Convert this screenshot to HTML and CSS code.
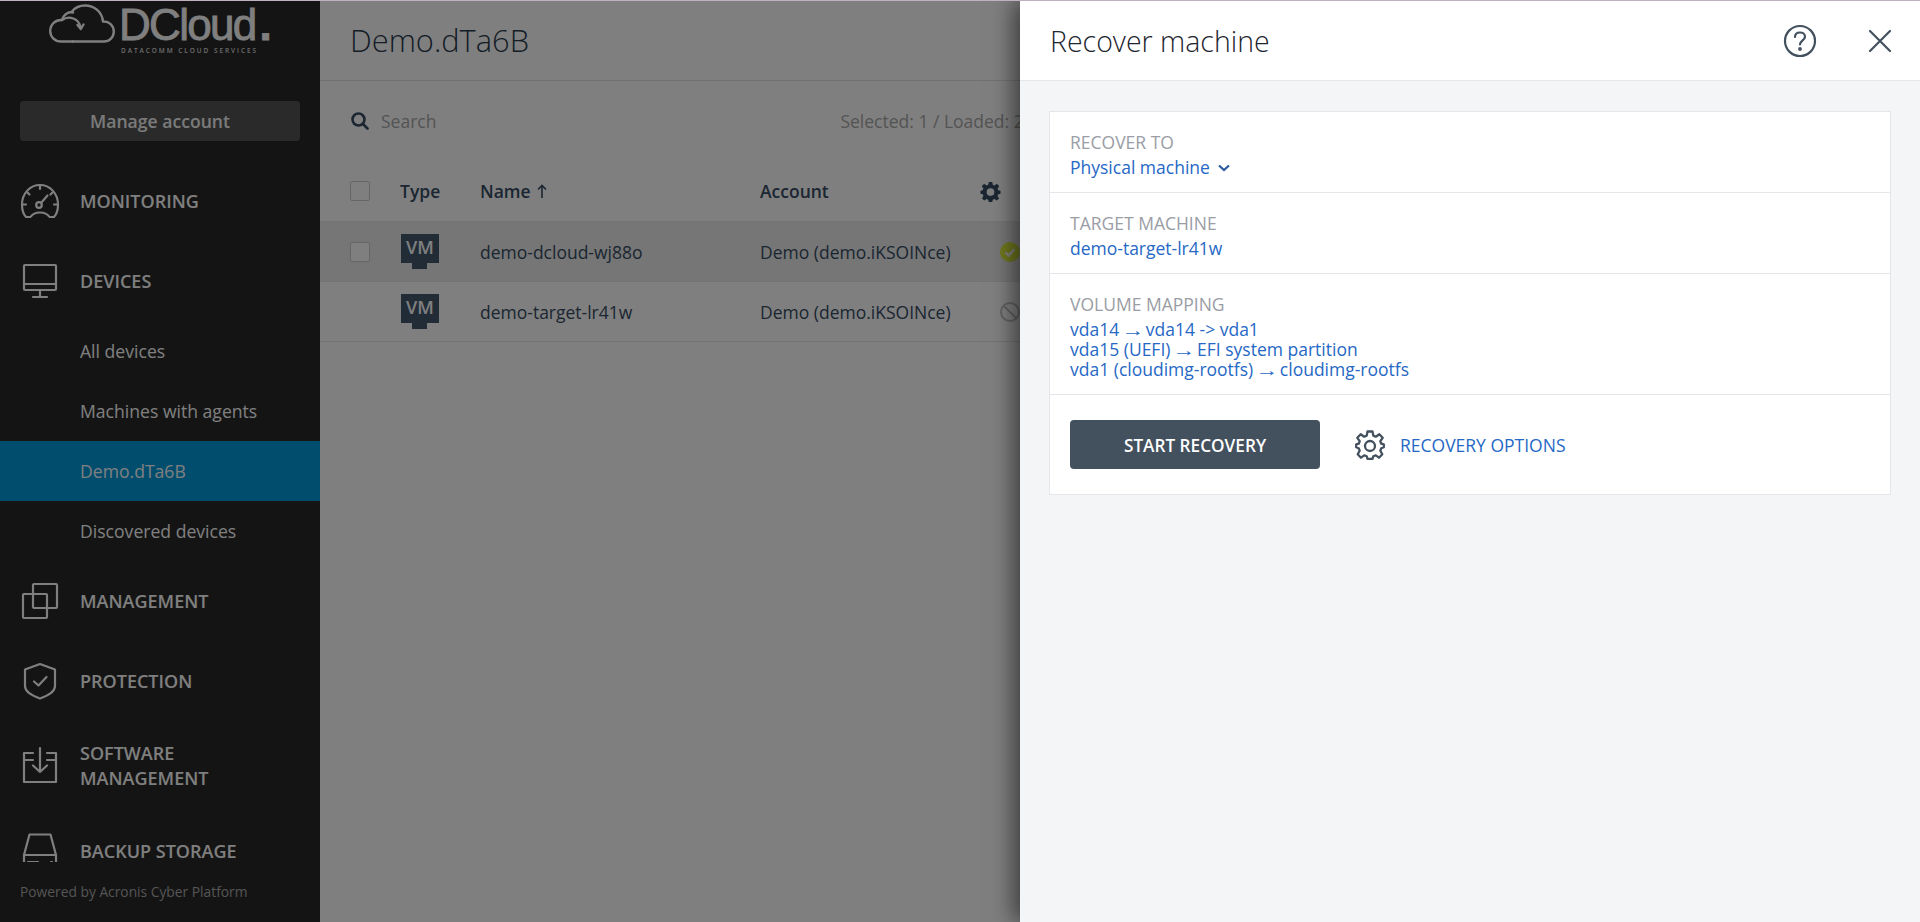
FILE: index.html
```html
<!DOCTYPE html>
<html lang="en">
<head>
<meta charset="utf-8">
<title>Recover machine</title>
<link rel="stylesheet" href="styles.css">
</head>
<body>
<div class="app">
  <aside class="sidebar">
    <div class="logo">
      <svg class="logo-cloud" viewBox="0 0 66 40" fill="none" stroke="currentColor" stroke-width="2.4" stroke-linecap="round" stroke-linejoin="round">
        <path d="M24 38.5H12C5.5 38.500 1.200 33.500 1.200 28C1.200 21.500 6.500 16.500 13 17C15 10.500 20 8.500 24 9.500"/>
        <path d="M24 38.500H55C60.500 38.500 64.800 34 64.800 28.500C64.800 22.500 60 18 54 18.500C53 9 45.500 2.500 36 2.500C30.500 2.500 26 4.700 23 8.500"/>
        <path d="M13 17C20 12 30 15.500 31.500 24.500"/>
        <path d="M28.500 22L31.800 26L34.500 21.500"/>
      </svg>
      <div class="logo-text">
        <div class="logo-name">DCloud<span class="logo-dot">.</span></div>
        <div class="logo-tag">DATACOMM CLOUD SERVICES</div>
      </div>
    </div>
    <button class="manage">Manage account</button>
    <nav class="nav">
      <a class="nav-top">
        <svg class="nav-icon" viewBox="0 0 40 40" fill="none" stroke="currentColor" stroke-width="2.2" stroke-linecap="round" stroke-linejoin="round">
          <path d="M6 36C3 33 2 28 2 23.500C2 12.500 10 4 20 4C30 4 38 12.500 38 23.500C38 28 37 33 34 36H29.500C27.500 33 24 31.500 20 31.500C16 31.500 12.500 33 10.500 36Z"/>
          <path d="M20 4V8M7 11L9.500 13.500M33 11L30.500 13.500M2 23.500H6M38 23.500H34"/>
          <circle cx="19" cy="24" r="2.800"/>
          <path d="M21 22L27.500 14.500"/>
        </svg>
        <span>MONITORING</span>
      </a>
      <a class="nav-top">
        <svg class="nav-icon" viewBox="0 0 40 40" fill="none" stroke="currentColor" stroke-width="2.2" stroke-linecap="round" stroke-linejoin="round">
          <rect x="4" y="4" width="32" height="25" rx="1"/>
          <path d="M4 23H36M20 29V35M13 36H27"/>
        </svg>
        <span>DEVICES</span>
      </a>
      <a class="nav-sub">All devices</a>
      <a class="nav-sub">Machines with agents</a>
      <a class="nav-sub is-active">Demo.dTa6B</a>
      <a class="nav-sub">Discovered devices</a>
      <a class="nav-top">
        <svg class="nav-icon" viewBox="0 0 40 40" fill="none" stroke="currentColor" stroke-width="2.2" stroke-linejoin="round">
          <rect x="13" y="3" width="24" height="24" rx="1"/>
          <rect x="3" y="13" width="24" height="24" rx="1"/>
        </svg>
        <span>MANAGEMENT</span>
      </a>
      <a class="nav-top">
        <svg class="nav-icon" viewBox="0 0 40 40" fill="none" stroke="currentColor" stroke-width="2.2" stroke-linecap="round" stroke-linejoin="round">
          <path d="M20 3L35 8.500V25C35 30 30 34 20 37.500C10 34 5 30 5 25V8.500Z"/>
          <path d="M14 20.500L18.500 24.500L26.500 16"/>
        </svg>
        <span>PROTECTION</span>
      </a>
      <a class="nav-top nav-tall">
        <svg class="nav-icon" viewBox="0 0 40 40" fill="none" stroke="currentColor" stroke-width="2.2" stroke-linecap="round" stroke-linejoin="round">
          <path d="M13 7H4V36H36V7H27M4 14H13M27 14H36"/>
          <path d="M20 2V26M13 19.500L20 26L27 19.500"/>
        </svg>
        <span>SOFTWARE<br>MANAGEMENT</span>
      </a>
      <a class="nav-top">
        <svg class="nav-icon" viewBox="0 0 40 40" fill="none" stroke="currentColor" stroke-width="2.2" stroke-linecap="round" stroke-linejoin="round">
          <path d="M4 24L9.500 3.500H30.500L36 24M4 24V38H36V24ZM8 31H18M31 31H32"/>
        </svg>
        <span>BACKUP STORAGE</span>
      </a>
    </nav>
    <div class="powered">Powered by Acronis Cyber Platform</div>
  </aside>

  <main class="main">
    <header class="main-head">Demo.dTa6B</header>
    <div class="toolbar">
      <svg class="search-icon" viewBox="0 0 18 18" fill="none" stroke="currentColor" stroke-width="2.600" stroke-linecap="round">
        <circle cx="7.500" cy="7.500" r="6"/>
        <path d="M12 12L16.500 16.500"/>
      </svg>
      <span class="search-text">Search</span>
      <span class="selected">Selected: 1 / Loaded: 2</span>
    </div>
    <div class="table">
      <div class="row row-head">
        <span class="cell-check"><i class="checkbox"></i></span>
        <span class="cell-type">Type</span>
        <span class="cell-name">Name <svg class="sort" viewBox="0 0 10 14" fill="none" stroke="currentColor" stroke-width="1.600"><path d="M5 14V1.500M1 5.500L5 1.500L9 5.500"/></svg></span>
        <span class="cell-account">Account</span>
        <svg class="table-gear" viewBox="0 0 24 24"><path fill="currentColor" fill-rule="evenodd" d="M10 1H14L14.600 4.300L16.500 5.100L19.300 3.200L22 6L20.100 8.700L20.900 10.600L23.500 11V14.500L20.900 15.200L20.100 17.100L21.800 19.900L19.100 22.400L16.500 20.700L14.600 21.500L14 24H10L9.400 21.500L7.500 20.700L4.900 22.400L2.200 19.900L3.900 17.100L3.100 15.200L.5 14.500V11L3.100 10.600L3.900 8.700L2 6L4.700 3.200L7.500 5.100L9.400 4.300ZM12 8.300A4.400 4.400 0 1 0 12 17.100A4.400 4.400 0 1 0 12 8.300Z"/></svg>
      </div>
      <div class="row row-selected">
        <span class="cell-check"><i class="checkbox"></i></span>
        <span class="cell-type"><span class="vm">VM</span></span>
        <span class="cell-name">demo-dcloud-wj88o</span>
        <span class="cell-account">Demo (demo.iKSOINce)</span>
        <svg class="status" viewBox="0 0 20 20"><circle cx="10" cy="10" r="10" fill="#dff03c"/><path d="M5.500 10.500L8.800 13.500L14.500 7" fill="none" stroke="#fff" stroke-width="2.400"/></svg>
      </div>
      <div class="row">
        <span class="cell-check"></span>
        <span class="cell-type"><span class="vm">VM</span></span>
        <span class="cell-name">demo-target-lr41w</span>
        <span class="cell-account">Demo (demo.iKSOINce)</span>
        <svg class="status" viewBox="0 0 20 20" fill="none" stroke="#c4c4c4" stroke-width="2"><circle cx="10" cy="10" r="9"/><path d="M3.500 3.500L16.500 16.500"/></svg>
      </div>
    </div>
  </main>

  <div class="backdrop"></div>

  <section class="panel">
    <header class="panel-head">
      <h1 class="panel-title">Recover machine</h1>
      <div class="panel-tools">
        <svg class="tool-help" viewBox="0 0 34 34" fill="none" stroke="currentColor" stroke-width="2.200" stroke-linecap="round">
          <circle cx="17" cy="17" r="15"/>
          <path d="M12 13C12 10 14.300 8.500 17 8.500C19.800 8.500 22 10.200 22 12.800C22 16.300 17 16.500 17 20.500"/>
          <circle cx="17" cy="25" r=".8" fill="currentColor"/>
        </svg>
        <svg class="tool-close" viewBox="0 0 24 24" fill="none" stroke="currentColor" stroke-width="2.200" stroke-linecap="round">
          <path d="M2 2L22 22M22 2L2 22"/>
        </svg>
      </div>
    </header>
    <div class="panel-body">
      <div class="card">
        <div class="field">
          <div class="field-label">RECOVER TO</div>
          <div class="field-value">Physical machine <svg class="chevron" viewBox="0 0 12 8" fill="none" stroke="#2b5aa0" stroke-width="2.200"><path d="M1 1.500L6 6L11 1.500"/></svg></div>
        </div>
        <div class="field">
          <div class="field-label">TARGET MACHINE</div>
          <div class="field-value">demo-target-lr41w</div>
        </div>
        <div class="field">
          <div class="field-label">VOLUME MAPPING</div>
          <div class="field-value">vda14 <span class="arrow">→</span> vda14 -&gt; vda1</div>
          <div class="field-line">vda15 (UEFI) <span class="arrow">→</span> EFI system partition</div>
          <div class="field-line">vda1 (cloudimg-rootfs) <span class="arrow">→</span> cloudimg-rootfs</div>
        </div>
        <div class="actions">
          <button class="start">START RECOVERY</button>
          <svg class="options-gear" viewBox="0 0 30 30" fill="none" stroke="currentColor" stroke-width="2.300" stroke-linejoin="round">
            <path d="M12.500 1.500H17.500L18.300 5.600L20.800 6.700L24.300 4.300L27.700 7.800L25.300 11.200L26.300 13.700L28.800 14.300V17.300L26.300 18.300L25.300 20.800L27.300 24.300L24 27.700L20.800 25.300L18.300 26.300L17.500 28.800H12.500L11.700 26.300L9.200 25.300L6 27.700L2.700 24.300L4.700 20.800L3.700 18.300L1.200 17.300V14.300L3.700 13.700L4.700 11.200L2.300 7.800L5.700 4.300L9.200 6.700L11.700 5.600Z"/>
            <circle cx="15" cy="16" r="5"/>
          </svg>
          <a class="options-link">RECOVERY OPTIONS</a>
        </div>
      </div>
    </div>
  </section>
</div>
</body>
</html>
```
FILE: styles.css
```css
* { box-sizing: border-box; }
html, body { margin: 0; height: 100%; overflow: hidden; }
body {
  border-top: 1px solid #bfb1c0;
  font-family: "Open Sans", "Liberation Sans", sans-serif;
  font-size: 17.5px;
  color: #374c64;
  background: #fff;
}
.app { position: relative; display: flex; height: 921px; overflow: hidden; }

/* sidebar */
.sidebar { width: 320px; flex: none; display: flex; flex-direction: column; background: #282828; color: #fff; }
.logo { height: 100px; display: flex; align-items: flex-start; padding: 2px 0 0 49px; }
.logo-cloud { width: 66px; height: 40px; flex: none; }
.logo-text { margin: -1px 0 0 6px; }
.logo-name { margin-left: -2px; font-family: "Liberation Sans", sans-serif; font-size: 44px; line-height: 46px; letter-spacing: -1.700px; white-space: nowrap; -webkit-text-stroke: .8px #fff; }
.logo-dot { letter-spacing: 0; margin-left: 4px; font-weight: 700; }
.logo-tag { font-size: 6.500px; line-height: 8px; margin-top: -1px; letter-spacing: 1.930px; font-weight: 600; white-space: nowrap; color: #d8d8d8; }
.manage {
  width: 280px; height: 40px; margin: 0 20px 20px; flex: none;
  border: 0; border-radius: 4px; background: #555;
  font: 600 17.600px "Open Sans", sans-serif; color: #f4f4f4;
}
.nav { flex: 1; min-height: 0; overflow: hidden; }
.nav-top { display: flex; align-items: center; height: 80px; padding-left: 20px; font-size: 18px; font-weight: 600; line-height: 25px; }
.nav-tall { height: 90px; }
.nav-icon { width: 40px; height: 40px; flex: none; margin-right: 20px; }
.nav-sub { display: flex; align-items: center; height: 60px; padding-left: 80px; font-size: 17.600px; }
.is-active { background: #009adc; }
.powered { height: 60px; flex: none; padding: 20px 0 0 20px; font-size: 13.800px; line-height: 20px; color: #aaa; }

/* main */
.main { flex: 1; min-width: 0; background: #fff; }
.main-head { height: 80px; padding-left: 30px; border-bottom: 1px solid #e4e4e4; color: #2a3a4e; font-size: 30.800px; font-weight: 300; line-height: 79px; }
.toolbar { display: flex; align-items: center; height: 80px; padding-left: 31px; }
.search-icon { width: 18px; height: 18px; margin-right: 12px; }
.search-text { color: #a8a8a8; }
.selected { margin-left: 404px; color: #a8a8a8; white-space: nowrap; }
.row { display: flex; align-items: center; height: 60px; padding-left: 30px; border-bottom: 1px solid #e6e6e6; }
.row-head { height: 61px; font-weight: 600; }
.row-selected { background: #ececec; }
.cell-check { width: 50px; flex: none; display: flex; }
.cell-type { width: 80px; flex: none; }
.cell-name { width: 280px; flex: none; }
.cell-account { width: 240px; flex: none; white-space: nowrap; }
.row-head .cell-account { width: 220px; }
.checkbox { display: block; width: 20px; height: 20px; border: 1px solid #ccc; border-radius: 2px; background: #fff; }
.sort { width: 10px; height: 14px; margin-left: 2px; }
.table-gear { width: 21px; height: 21px; color: #374c64; }
.status { width: 20px; height: 20px; flex: none; }
.vm {
  position: relative; display: block; width: 38px; height: 29px; margin: 0 0 6px 1px;
  background: #43586f; color: #fff; font-size: 18px; font-weight: 600; line-height: 27px; text-align: center;
}
.vm::after {
  content: ""; position: absolute; left: 11px; top: 29px; width: 15px; height: 6px; background: #43586f;
}

/* overlay */
.backdrop { position: absolute; inset: 0; background: rgba(0, 0, 0, .5); }
.panel {
  position: absolute; top: 0; bottom: 0; left: 1020px; right: 0;
  display: flex; flex-direction: column; background: #f4f5f7;
  box-shadow: -6px 0 22px rgba(0, 0, 0, .55);
}
.panel-head {
  display: flex; align-items: center; justify-content: space-between; height: 80px; flex: none;
  padding: 0 28px 0 30px; background: #fff; border-bottom: 1px solid #e4e6e9;
}
.panel-title { margin: 0; font-size: 28.500px; font-weight: 300; color: #1e262f; }
.panel-tools { display: flex; align-items: center; color: #43505e; }
.tool-help { width: 34px; height: 34px; margin-right: 51px; }
.tool-close { width: 24px; height: 24px; }
.panel-body { padding: 30px 29px; }
.card { background: #fff; border: 1px solid #e4e6e9; }
.field { padding: 20px 20px 15px; border-bottom: 1px solid #e4e6e9; }
.field-label { color: #9a9da5; line-height: 20px; margin-bottom: 5px; }
.field-value, .field-line { color: #2668c5; line-height: 20px; }
.arrow { display: inline-block; line-height: 0; transform: scaleX(1.3); }
.chevron { width: 12px; height: 8px; margin-left: 4px; vertical-align: 2px; }
.actions { display: flex; align-items: center; height: 99px; padding-left: 20px; }
.start {
  width: 250px; height: 49px; padding: 2px 0 0; border: 0; border-radius: 4px; background: #43505e; color: #fff;
  font: 600 17.200px "Open Sans", sans-serif; margin-right: 35px;
}
.options-gear { width: 30px; height: 30px; color: #43505e; margin-right: 15px; }
.options-link { color: #2668c5; }
```
